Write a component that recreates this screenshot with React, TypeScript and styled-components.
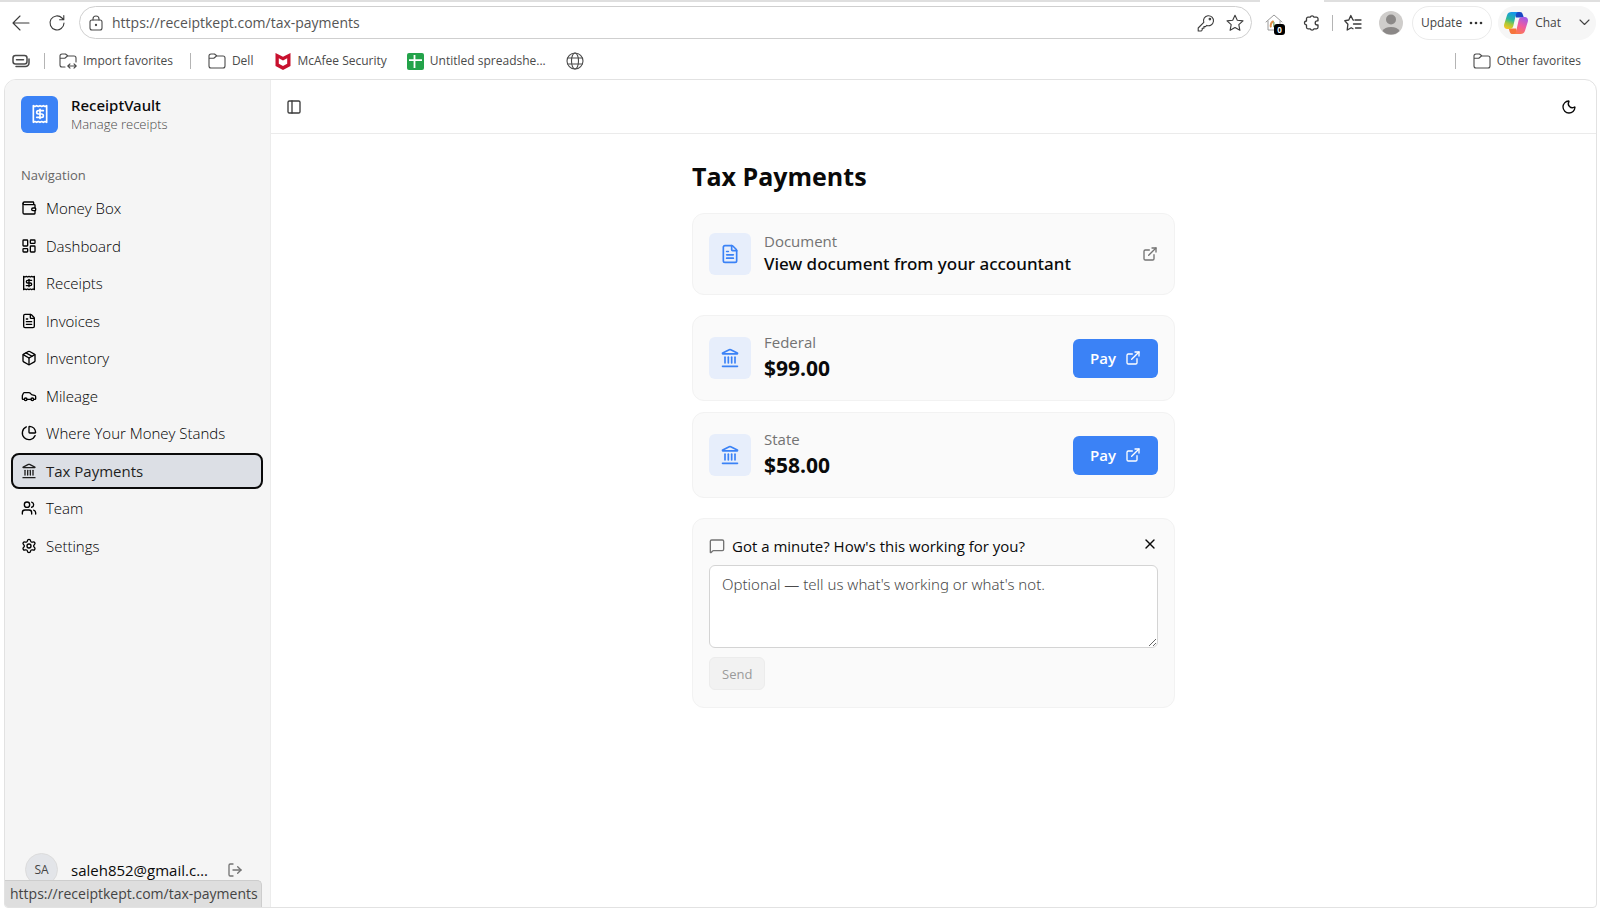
import React from "react";
import styled, { createGlobalStyle } from "styled-components";
import {
  Wallet,
  LayoutDashboard,
  Receipt,
  FileText,
  Package,
  Car,
  ChartPie,
  Landmark,
  Users,
  Settings,
  LogOut,
  PanelLeft,
  Moon,
  ExternalLink,
  MessageSquare,
  X,
} from "lucide-react";
import type { LucideIcon } from "lucide-react";

const GlobalStyle = createGlobalStyle`
  *, *::before, *::after { box-sizing: border-box; }
  body {
    margin: 0;
    background: #ffffff;
    color: #0a0a0a;
    font-family: "Open Sans", "Noto Sans", sans-serif;
    font-size: 15px;
    line-height: 22px;
  }
  button, input, textarea { font: inherit; color: inherit; }
  h1, p, ul { margin: 0; padding: 0; }
  a { color: inherit; text-decoration: none; }
  svg { flex: none; display: block; }
`;

/* ---------- Browser chrome ---------- */

const Window = styled.div`
  display: flex;
  flex-direction: column;
  min-height: 100vh;
`;

const TabStrip = styled.div`
  display: flex;
  height: 2px;
`;

const TabStripPart = styled.div<{ $grow?: boolean }>`
  background: #dfdfdf;
  flex: ${(p) => (p.$grow ? "1" : "0 0 276px")};
`;

const ActiveTab = styled.div`
  flex: 0 0 64px;
`;

const Toolbar = styled.header`
  display: flex;
  align-items: center;
  height: 41px;
  padding: 0 4px 0 8px;
`;

const IconButton = styled.button<{ $size?: number }>`
  display: inline-flex;
  align-items: center;
  justify-content: center;
  flex: none;
  width: ${(p) => p.$size ?? 38}px;
  height: 32px;
  padding: 0;
  border: 0;
  border-radius: 6px;
  background: none;
  color: #3b3b3b;
`;

const AddressBar = styled.form`
  display: flex;
  align-items: center;
  flex: 1;
  height: 33px;
  margin-right: 3px;
  padding: 0 1px 0 9px;
  border: 1px solid #cfcfcf;
  border-radius: 17px;
  color: #4a4a4a;
`;

const AddressInput = styled.input`
  flex: 1;
  min-width: 0;
  margin-left: 9px;
  padding: 0;
  border: 0;
  outline: 0;
  background: none;
  font-size: 14px;
  color: #555555;
`;

const Divider = styled.span<{ $gap: number }>`
  flex: none;
  width: 1px;
  height: 16px;
  margin: 0 ${(p) => p.$gap}px;
  background: #b4b4b4;
`;

const UpdateButton = styled.button`
  display: flex;
  align-items: center;
  gap: 7px;
  height: 34px;
  margin: 0 6px 0 2px;
  padding: 0 8px;
  border: 1px solid #ebebeb;
  border-radius: 17px;
  background: #ffffff;
  color: #444444;
  font-size: 12px;
`;

const ChatButton = styled(UpdateButton)`
  margin: 0;
  padding: 0 5px;
  border-color: #f6f6f6;
  background: #f6f6f6;
`;

const ChatLabel = styled.span`
  margin-right: 11px;
`;

const ExtensionBox = styled.span`
  position: relative;
  display: block;
`;

const ExtensionBadge = styled.span`
  position: absolute;
  right: -2px;
  bottom: -3px;
  width: 11px;
  height: 11px;
  border-radius: 3px;
  background: #000000;
  color: #ffffff;
  font-size: 8px;
  font-weight: 700;
  line-height: 11px;
`;

const Bookmarks = styled.nav`
  display: flex;
  align-items: center;
  height: 36px;
  padding: 0 19px 0 12px;
  font-size: 12px;
  color: #4a4a4a;
`;

const Bookmark = styled.a<{ $after?: number }>`
  display: flex;
  align-items: center;
  gap: 6px;
  margin-right: ${(p) => p.$after ?? 0}px;
  white-space: nowrap;
`;

const Spacer = styled.span`
  flex: 1;
`;

/* ---------- App shell ---------- */

const Shell = styled.div`
  position: relative;
  display: flex;
  flex: 1;
  margin: 0 3px 2px 4px;
  border: 1px solid #e2e2e2;
  border-radius: 12px 12px 4px 4px;
  overflow: hidden;
`;

const Sidebar = styled.aside`
  display: flex;
  flex-direction: column;
  flex: 0 0 266px;
  min-width: 0;
  padding: 15px 7px 21px 6px;
  border-right: 1px solid #ececec;
  background: #f5f5f5;
`;

const Brand = styled.div`
  display: flex;
  align-items: center;
  gap: 13px;
  padding: 0 10px;
`;

const BrandMark = styled.span`
  display: flex;
  align-items: center;
  justify-content: center;
  width: 37px;
  height: 37px;
  border-radius: 6px;
  background: #3b82f6;
  color: #ffffff;
`;

const BrandName = styled.p`
  font-family: "Noto Sans", sans-serif;
  font-weight: 500;
  line-height: 20px;
`;

const BrandNote = styled.p`
  font-size: 13px;
  font-weight: 300;
  line-height: 18px;
  color: #4a4a4a;
`;

const NavLabel = styled.p`
  margin: 30px 0 3px;
  padding: 0 10px;
  font-size: 13px;
  line-height: 24px;
  color: #666666;
`;

const NavList = styled.ul`
  display: grid;
  grid-auto-rows: 1fr;
  gap: 1px;
  height: 374px;
  list-style: none;
`;

const NavLink = styled.a<{ $active?: boolean }>`
  display: flex;
  align-items: center;
  gap: 9px;
  height: 100%;
  padding: 0 8px;
  border: 2px solid ${(p) => (p.$active ? "#0a0a0a" : "transparent")};
  border-radius: 8px;
  background: ${(p) => (p.$active ? "#dcdfe5" : "transparent")};
  color: ${(p) => (p.$active ? "#1f1f1f" : "#000000")};
  font-weight: ${(p) => (p.$active ? 400 : 300)};
`;

const UserRow = styled.div`
  display: flex;
  align-items: center;
  margin-top: auto;
  padding: 0 20px 0 14px;
`;

const Avatar = styled.span`
  display: flex;
  align-items: center;
  justify-content: center;
  flex: none;
  width: 33px;
  height: 33px;
  border: 1px solid #dcdcdc;
  border-radius: 50%;
  background: #e3e5e9;
  font-size: 12px;
  color: #444444;
`;

const Email = styled.span`
  flex: 1;
  min-width: 0;
  margin: 0 12px 0 13px;
  overflow: hidden;
  white-space: nowrap;
  text-overflow: ellipsis;
`;

const LinkStatus = styled.div`
  position: absolute;
  left: 0;
  bottom: 0;
  height: 27px;
  padding: 0 3px 0 5px;
  border: 1px solid #cdcdcd;
  border-width: 1px 1px 0 0;
  border-radius: 0 5px 0 0;
  background: #dedede;
  font-size: 14px;
  line-height: 26px;
  color: #444444;
`;

const Content = styled.div`
  flex: 1;
  min-width: 0;
`;

const TopBar = styled.div`
  display: flex;
  align-items: center;
  justify-content: space-between;
  height: 54px;
  padding: 0 8px;
  border-bottom: 1px solid #ebebeb;
`;

const Column = styled.main`
  display: flex;
  flex-direction: column;
  max-width: 483px;
  margin: 0 auto;
  padding: 24px 0;
`;

const Title = styled.h1`
  margin-bottom: 19px;
  font-size: 25px;
  font-weight: 700;
  line-height: 36px;
`;

const Card = styled.section<{ $after?: number }>`
  display: flex;
  align-items: center;
  gap: 13px;
  min-height: 82px;
  margin-bottom: ${(p) => p.$after ?? 0}px;
  padding: 15px 16px;
  border: 1px solid #f2f2f2;
  border-radius: 12px;
  background: #fafafa;
`;

const PaymentCard = styled(Card)`
  min-height: 86px;
`;

const IconTile = styled.span`
  display: flex;
  align-items: center;
  justify-content: center;
  flex: none;
  width: 42px;
  height: 42px;
  border-radius: 6px;
  background: #e7eefb;
  color: #3b82f6;
`;

const CardText = styled.div`
  flex: 1;
  padding-bottom: 2px;
`;

const CardLabel = styled.p`
  color: #737373;
`;

const CardTitle = styled.p`
  font-family: "Noto Sans", sans-serif;
  font-size: 17px;
  font-weight: 500;
  line-height: 24px;
`;

const Amount = styled.p`
  font-size: 21px;
  font-weight: 700;
  line-height: 30px;
`;

const PayButton = styled.a`
  display: flex;
  align-items: center;
  justify-content: center;
  gap: 9px;
  width: 85px;
  height: 39px;
  border-radius: 6px;
  background: #3b82f6;
  color: #ffffff;
  font-weight: 600;
`;

const OpenLink = styled.a`
  color: #737373;
`;

const Feedback = styled.form`
  padding: 15px 16px 17px;
  border: 1px solid #f2f2f2;
  border-radius: 12px;
  background: #fafafa;
`;

const FeedbackHead = styled.div`
  display: flex;
  align-items: center;
  gap: 7px;
  height: 24px;
  margin-bottom: 7px;
  color: #737373;
`;

const FeedbackLabel = styled.label`
  flex: 1;
  color: #0a0a0a;
`;

const CloseButton = styled(IconButton)`
  align-self: flex-start;
  height: 20px;
  color: #0a0a0a;
`;

const Message = styled.textarea`
  display: block;
  width: 100%;
  height: 83px;
  padding: 7px 12px;
  border: 1px solid #d4d4d4;
  border-radius: 6px;
  outline: 0;
  background: #ffffff;
  font-family: "Noto Sans", sans-serif;
  resize: vertical;
  &::placeholder { color: #4a4a4a; font-weight: 300; opacity: 1; }
`;

const SendButton = styled.button`
  height: 33px;
  margin-top: 9px;
  padding: 0 12px;
  border: 1px solid #ececec;
  border-radius: 6px;
  background: #f2f2f2;
  font-size: 13px;
  font-weight: 500;
  &:disabled { color: #9a9a9a; }
`;

/* ---------- Icons of the browser chrome ---------- */

type LineIconProps = { width?: number; height?: number; stroke?: number; children: React.ReactNode };

const LineIcon = ({ width = 18, height = 18, stroke = 1.1, children }: LineIconProps) => (
  <svg
    width={width}
    height={height}
    viewBox={`0 0 ${width} ${height}`}
    fill="none"
    stroke="currentColor"
    strokeWidth={stroke}
    strokeLinecap="round"
    strokeLinejoin="round"
    aria-hidden="true"
  >
    {children}
  </svg>
);

const BackIcon = () => (
  <LineIcon>
    <path d="M17 9H1M8 2 1 9l7 7" />
  </LineIcon>
);

const ReloadIcon = () => (
  <LineIcon>
    <path d="M16 9a7 7 0 1 1-2-5l1.500 1.500M15.800 1.500v4.200h-4.200" />
  </LineIcon>
);

const LockIcon = () => (
  <LineIcon width={14} height={16}>
    <rect x="1" y="5" width="12" height="10" rx="2" />
    <path d="M4 5V4a3 3 0 0 1 6 0v1" />
    <circle cx="7" cy="10" r=".6" fill="currentColor" />
  </LineIcon>
);

const KeyIcon = () => (
  <LineIcon>
    <path d="M6.800 8.400a5 5 0 1 1 3 3L8.500 12.600H6.900v1.700H5.200V16l-.9 1H1.200v-3z" />
    <circle cx="12.900" cy="5.100" r=".8" />
  </LineIcon>
);

const StarIcon = () => (
  <LineIcon>
    <path d="m9 1.200 2.300 5 5.700.7-4.200 3.800 1.100 5.600L9 13.600l-4.900 2.700 1.100-5.600L1 6.900l5.700-.7z" />
  </LineIcon>
);

const HouseIcon = () => (
  <LineIcon stroke={1}>
    <g stroke="#9a9a9a">
      <path d="M1 8 9 1l8 7M3 7v9h12V7" />
    </g>
    <path d="M8 7.500c-2 1-2.600 2.500-2.200 5" stroke="#e0904c" strokeWidth="2" />
    <path d="M8.800 8.500v4" stroke="#86b07a" strokeWidth="1.500" />
  </LineIcon>
);

const PuzzleIcon = () => (
  <LineIcon stroke={1.3}>
    <path d="M5 3.200h2.200a2 2 0 0 1 3.800 0h2.500a1.500 1.500 0 0 1 1.500 1.500v2.100h-.7a2 2 0 1 0 0 4.200h.7v2.300a1.500 1.500 0 0 1-1.500 1.500H11a2 2 0 0 1-3.800 0H5a1.500 1.500 0 0 1-1.500-1.500V11a2 2 0 0 1 0-4V4.700A1.500 1.500 0 0 1 5 3.200z" />
  </LineIcon>
);

const FavoritesIcon = () => (
  <LineIcon stroke={1.3}>
    <path d="M9.500 6.200 9 6 6.800 1.500 4.800 6l-4 .7 3.100 3.500L3.200 16l4-2.300 1.800 1M11 6h6M9.500 10H17M11.500 14H17" />
  </LineIcon>
);

const TabActionsIcon = () => (
  <LineIcon width={18} height={14} stroke={1.5}>
    <rect x="1" y="1.500" width="14" height="8.500" rx="2.500" />
    <path d="M4.500 5.800h7M4 12.500h9.500a3.500 3.500 0 0 0 3.500-3.500V5" />
  </LineIcon>
);

const FolderIcon = () => (
  <LineIcon width={18} height={16}>
    <path d="M1 4.500V3a2 2 0 0 1 2-2h3.500L9 3h6a2 2 0 0 1 2 2v8a2 2 0 0 1-2 2H3a2 2 0 0 1-2-2zM1 5.200h4.800L8.500 3" />
  </LineIcon>
);

const ImportIcon = () => (
  <LineIcon width={18} height={16}>
    <path d="M6 14H3a2 2 0 0 1-2-2V3a2 2 0 0 1 2-2h3.500L9 3h6a2 2 0 0 1 2 2v4M1 5.200h4.800L8.500 3M9 13h8M11 10.800 8.800 13l2.200 2.200M15 10.800l2.200 2.200-2.200 2.200" />
  </LineIcon>
);

const McAfeeIcon = () => (
  <svg width="16" height="17" viewBox="0 0 16 17" aria-hidden="true">
    <path d="M.5 0 8 3.800 15.500 0v13L8 17 .5 13zM3.800 5.300v5.500L8 13l4.200-2.200V5.300L8 7.500z" fill="#c8102e" fillRule="evenodd" />
  </svg>
);

const SheetIcon = () => (
  <svg width="17" height="17" viewBox="0 0 17 17" aria-hidden="true">
    <rect width="17" height="17" rx="2" fill="#23a34a" />
    <path d="M2 7.200h13M7.500 2v13" stroke="#ffffff" strokeWidth="1.800" />
  </svg>
);

const GlobeIcon = () => (
  <LineIcon>
    <circle cx="9" cy="9" r="8" />
    <ellipse cx="9" cy="9" rx="3.500" ry="8" />
    <path d="M1.700 6h14.600M1.700 12h14.600" />
  </LineIcon>
);

const ProfileIcon = () => (
  <svg width="24" height="24" viewBox="0 0 24 24" aria-hidden="true">
    <circle cx="12" cy="12" r="12" fill="#cfcdcb" />
    <circle cx="12" cy="8.500" r="5" fill="#8b8887" />
    <path d="M3.500 20a9 6 0 0 1 17 0 12 12 0 0 1-17 0z" fill="#8b8887" />
  </svg>
);

const DotsIcon = () => (
  <svg width="14" height="4" viewBox="0 0 14 4" fill="#333333" aria-hidden="true">
    <circle cx="2" cy="2" r="1.300" />
    <circle cx="7" cy="2" r="1.300" />
    <circle cx="12" cy="2" r="1.300" />
  </svg>
);

const ChevronIcon = () => (
  <LineIcon width={11} height={7}>
    <path d="m1 1 4.500 4.500L10 1" />
  </LineIcon>
);

const CopilotIcon = () => (
  <svg width="24" height="22" viewBox="0 0 24 22" aria-hidden="true">
    <defs>
      <linearGradient id="cp-left" x1="0.600" y1="0" x2="0.300" y2="1">
        <stop offset="0" stopColor="#1495ec" />
        <stop offset=".45" stopColor="#2cb89a" />
        <stop offset=".7" stopColor="#a4c83a" />
        <stop offset="1" stopColor="#f7c325" />
      </linearGradient>
      <linearGradient id="cp-right" x1="0.700" y1="0" x2="0.300" y2="1">
        <stop offset="0" stopColor="#a15be8" />
        <stop offset=".5" stopColor="#ef5aa0" />
        <stop offset="1" stopColor="#fb7a4c" />
      </linearGradient>
    </defs>
    <path d="M10 0h6c1.500 0 2.200.8 2.700 2.200L19.800 5.500H12z" fill="#1b49c4" />
    <path d="M14 22H8.500c-1.500 0-2.300-.9-2.800-2.300L4.800 16.500H12z" fill="#f5743c" />
    <path d="M7.500 0H14c-1.300.4-1.700 1.300-2.100 2.600L9.300 14C8.800 16 7.500 17 5.800 17H3.200C.7 17-.5 15 .2 12.300L3 3.300C3.700 1.100 5.200 0 7.500 0z" fill="url(#cp-left)" />
    <path d="M16.500 22H10c1.300-.4 1.700-1.300 2.100-2.600L14.700 8c.5-2 1.800-3 3.500-3h2.600c2.500 0 3.700 2 3 4.700l-2.800 9c-.7 2.200-2.200 3.300-4.500 3.300z" fill="url(#cp-right)" />
  </svg>
);

/* ---------- Page ---------- */

const navItems: { label: string; icon: LucideIcon; active?: boolean }[] = [
  { label: "Money Box", icon: Wallet },
  { label: "Dashboard", icon: LayoutDashboard },
  { label: "Receipts", icon: Receipt },
  { label: "Invoices", icon: FileText },
  { label: "Inventory", icon: Package },
  { label: "Mileage", icon: Car },
  { label: "Where Your Money Stands", icon: ChartPie },
  { label: "Tax Payments", icon: Landmark, active: true },
  { label: "Team", icon: Users },
  { label: "Settings", icon: Settings },
];

const payments = [
  { label: "Federal", amount: "$99.00", after: 11 },
  { label: "State", amount: "$58.00", after: 20 },
];

const BrowserChrome = () => (
  <>
    <TabStrip>
      <TabStripPart $grow />
      <ActiveTab />
      <TabStripPart />
    </TabStrip>
    <Toolbar>
      <IconButton $size={26} aria-label="Back"><BackIcon /></IconButton>
      <IconButton $size={45} aria-label="Reload"><ReloadIcon /></IconButton>
      <AddressBar onSubmit={(e) => e.preventDefault()}>
        <LockIcon />
        <AddressInput aria-label="Address" defaultValue="https://receiptkept.com/tax-payments" />
        <IconButton $size={29} type="button" aria-label="Passwords"><KeyIcon /></IconButton>
        <IconButton $size={30} type="button" aria-label="Add to favorites"><StarIcon /></IconButton>
      </AddressBar>
      <IconButton aria-label="Extension">
        <ExtensionBox>
          <HouseIcon />
          <ExtensionBadge>0</ExtensionBadge>
        </ExtensionBox>
      </IconButton>
      <IconButton aria-label="Extensions"><PuzzleIcon /></IconButton>
      <Divider $gap={1} />
      <IconButton aria-label="Favorites"><FavoritesIcon /></IconButton>
      <IconButton aria-label="Profile"><ProfileIcon /></IconButton>
      <UpdateButton>Update <DotsIcon /></UpdateButton>
      <ChatButton>
        <CopilotIcon />
        <ChatLabel>Chat</ChatLabel>
        <ChevronIcon />
      </ChatButton>
    </Toolbar>
    <Bookmarks aria-label="Favorites bar">
      <Bookmark href="#tabs" aria-label="Tab actions"><TabActionsIcon /></Bookmark>
      <Divider $gap={14} />
      <Bookmark href="#import"><ImportIcon />Import favorites</Bookmark>
      <Divider $gap={17} />
      <Bookmark href="#dell" $after={22}><FolderIcon />Dell</Bookmark>
      <Bookmark href="#mcafee" $after={20}><McAfeeIcon />McAfee Security</Bookmark>
      <Bookmark href="#sheet" $after={20}><SheetIcon />Untitled spreadshe...</Bookmark>
      <Bookmark href="#web" aria-label="Web page"><GlobeIcon /></Bookmark>
      <Spacer />
      <Divider $gap={17} />
      <Bookmark href="#other"><FolderIcon />Other favorites</Bookmark>
    </Bookmarks>
  </>
);

export default function App() {
  return (
    <Window>
      <GlobalStyle />
      <BrowserChrome />
      <Shell>
        <Sidebar>
          <Brand>
            <BrandMark><Receipt size={20} /></BrandMark>
            <div>
              <BrandName>ReceiptVault</BrandName>
              <BrandNote>Manage receipts</BrandNote>
            </div>
          </Brand>
          <NavLabel>Navigation</NavLabel>
          <NavList>
            {navItems.map(({ label, icon: Icon, active }) => (
              <li key={label}>
                <NavLink href="#" $active={active} aria-current={active ? "page" : undefined}>
                  <Icon size={16} />
                  {label}
                </NavLink>
              </li>
            ))}
          </NavList>
          <UserRow>
            <Avatar>SA</Avatar>
            <Email>saleh852@gmail.com</Email>
            <IconButton $size={16} aria-label="Sign out"><LogOut size={16} color="#737373" /></IconButton>
          </UserRow>
        </Sidebar>
        <Content>
          <TopBar>
            <IconButton $size={30} aria-label="Toggle sidebar"><PanelLeft size={16} /></IconButton>
            <IconButton aria-label="Toggle theme"><Moon size={16} color="#0a0a0a" /></IconButton>
          </TopBar>
          <Column>
            <Title>Tax Payments</Title>
            <Card $after={20}>
              <IconTile><FileText size={20} /></IconTile>
              <CardText>
                <CardLabel>Document</CardLabel>
                <CardTitle>View document from your accountant</CardTitle>
              </CardText>
              <OpenLink href="#document" aria-label="Open document"><ExternalLink size={16} /></OpenLink>
            </Card>
            {payments.map((p) => (
              <PaymentCard key={p.label} $after={p.after}>
                <IconTile><Landmark size={20} /></IconTile>
                <CardText>
                  <CardLabel>{p.label}</CardLabel>
                  <Amount>{p.amount}</Amount>
                </CardText>
                <PayButton href="#pay">Pay <ExternalLink size={16} /></PayButton>
              </PaymentCard>
            ))}
            <Feedback onSubmit={(e) => e.preventDefault()}>
              <FeedbackHead>
                <MessageSquare size={16} />
                <FeedbackLabel htmlFor="feedback">Got a minute? How's this working for you?</FeedbackLabel>
                <CloseButton $size={16} type="button" aria-label="Dismiss"><X size={16} /></CloseButton>
              </FeedbackHead>
              <Message id="feedback" placeholder="Optional — tell us what's working or what's not." />
              <SendButton disabled>Send</SendButton>
            </Feedback>
          </Column>
        </Content>
        <LinkStatus>https://receiptkept.com/tax-payments</LinkStatus>
      </Shell>
    </Window>
  );
}
